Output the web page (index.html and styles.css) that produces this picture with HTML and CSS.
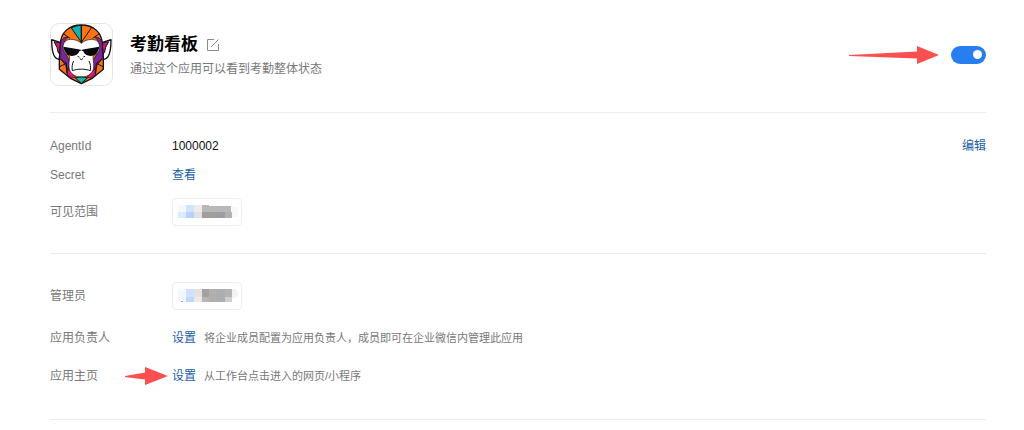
FILE: index.html
```html
<!DOCTYPE html>
<html lang="zh-CN">
<head>
<meta charset="utf-8">
<meta name="viewport" content="width=device-width, initial-scale=1">
<title>考勤看板</title>
<link rel="stylesheet" href="styles.css">
</head>
<body>
<main class="page">
  <header class="app-header">
    <div class="app-logo">
      <svg viewBox="153 72 183 183" aria-hidden="true">
        <g stroke="#141116" stroke-width="4" stroke-linejoin="round">
          <path d="M183 128L155 119c0 20 1 39 9 51 3 5 8 8 14 9zM305 128l28-9c0 20-1 39-9 51-3 5-8 8-14 9z" fill="#fff"/>
          <path d="M182 129l-20-4 9 17 3 14 6 8zM306 129l20-4-9 17-3 14-6 8z" fill="#d4146f" stroke-width="3"/>
          <path d="M244 75c-36 0-62 22-63 57l-3 45v31l35 28 31 15 31-15 35-28v-31l-3-45c-1-35-27-57-63-57z" fill="#ff7410"/>
          <path d="M244 76c-11 0-21 3-30 8l30 43z" fill="#10b3ae" stroke-width="3"/>
          <path d="M182 126c4-11 13-16 22-15l-9 10-5 20 7 20 12 22-6 42-6-28-17-24zM306 126c-4-11-13-16-22-15l9 10 5 20-7 20-12 22 6 42 6-28 17-24z" fill="#7a2599" stroke-width="2"/>
          <path d="M202 205l10 10 15 17-12 2-13-10zM286 205l-10 10-15 17 12 2 13-10z" fill="#e3177c" stroke-width="2"/>
          <path d="M180 177l19 13-20 10M308 177l-19 13 20 10M199 190l2 30M289 190l-2 30M244 76v52M190 101l20 14M298 101l-20 14M274 84l-30 43" fill="none" stroke-width="3"/>
          <path d="M189 142c0-15 9-23 23-24 13 0 25 5 32 12 7-7 19-12 32-12 14 1 23 9 23 24-1 13-7 19-18 24-3 3-2 9-1 15 2 12 2 23-2 32-5 10-17 18-34 18s-29-8-34-18c-4-9-4-20-2-32 1-6 2-12-1-15-11-5-17-11-18-24z" fill="#fff" stroke-width="2"/>
          <path d="M226 234c12-4 24-4 36 0l-18 16z" fill="#13b8af" stroke-width="3"/>
        </g>
        <path d="M190 140l45 8 9 2 9-2 45-8c-3 16-12 27-26 28-11 0-19-5-22-14l-6-3-6 3c-3 9-11 14-22 14-14-1-23-12-26-28z" fill="#08080a"/>
        <path d="M233 169l5 2M255 169l-5 2M239 176l5 3 5-3M217 212c15-6 39-6 54 0M221 183c-4 8-6 17-4 29M267 183c4 8 6 17 4 29" fill="none" stroke="#141116" stroke-width="3"/>
      </svg>
    </div>
    <div class="app-info">
      <div class="title-row">
        <h1 class="app-title">考勤看板</h1>
        <button class="edit-button" type="button" aria-label="编辑名称">
          <svg viewBox="0 0 12 12" aria-hidden="true"><path d="M7 .5H.5v11h11V5M4 8l7.500-7.500" /></svg>
        </button>
      </div>
      <p class="app-desc">通过这个应用可以看到考勤整体状态</p>
    </div>
    <svg class="arrow arrow-long" viewBox="0 0 90 18" aria-hidden="true"><path d="M0 9l68-3.500V0l22 9-22 9v-5.500L0 10z"/></svg>
    <input class="switch" type="checkbox" role="switch" aria-label="启用应用" checked>
  </header>

  <section class="section">
    <div class="row">
      <div class="label">AgentId</div>
      <div class="value">1000002</div>
      <a class="link" href="#edit">编辑</a>
    </div>
    <div class="row row-secret">
      <div class="label">Secret</div>
      <a class="link" href="#secret">查看</a>
    </div>
    <div class="row row-scope">
      <div class="label">可见范围</div>
      <div class="member">
        <svg viewBox="0 0 60 16" aria-hidden="true">
          <path fill="#f5f9ff" d="M0 1h8v7H0z"/><path fill="#deeaff" d="M0 8h8v6H0z"/>
          <path fill="#d0e3ff" d="M8 1h8v7H8z"/><path fill="#b4d2fc" d="M8 8h8v6H8z"/>
          <path fill="#efebea" d="M16 1h8v7h-8z"/><path fill="#e4dfe0" d="M16 8h8v6h-8z"/>
          <path fill="#b8b8b8" d="M24 1h7v1h22v6H24z"/><path fill="#a19f9e" d="M24 8h15v6H24z"/>
          <path fill="#9b9da3" d="M39 8h8v6h-8z"/><path fill="#b3b2b3" d="M47 8h7v6h-7z"/>
          <path fill="#f5f9fe" d="M54 3h6v10h-6z"/>
        </svg>
      </div>
    </div>
  </section>

  <section class="section section-manage">
    <div class="row">
      <div class="label">管理员</div>
      <div class="member">
        <svg viewBox="0 0 60 16" aria-hidden="true">
          <path fill="#f1f6ff" d="M0 1h8v13H3L0 9z"/><path fill="#76aef2" d="M3 13h2v1H3z"/>
          <path fill="#cfe2fd" d="M8 1h8v8H8z"/><path fill="#bed8fb" d="M8 9h8v5H8z"/>
          <path fill="#e4e1df" d="M16 1h8v8h-8z"/><path fill="#eeeae9" d="M16 9h8v5h-8z"/>
          <path fill="#a2a2a2" d="M24 1h7v8h-7z"/><path fill="#b2b0af" d="M31 1h8v13h-8z"/>
          <path fill="#b8b6b4" d="M24 9h7v5h-7z"/><path fill="#acaeb2" d="M39 1h8v13h-8z"/>
          <path fill="#b5b2b2" d="M47 1h7v8h-7z"/><path fill="#d2d0cf" d="M47 9h7v5h-7z"/>
          <path fill="#f1f3fb" d="M54 1h4l2 3v4l-3 2h-3z"/>
        </svg>
      </div>
    </div>
    <div class="row row-setting">
      <div class="label">应用负责人</div>
      <a class="link" href="#owner">设置</a>
      <span class="hint">将企业成员配置为应用负责人，成员即可在企业微信内管理此应用</span>
    </div>
    <div class="row row-setting">
      <div class="label">应用主页
        <svg class="arrow arrow-short" viewBox="0 0 43 18" aria-hidden="true"><path d="M0 9l20-3.500V0l23 9-23 9v-5.500L0 10z"/></svg>
      </div>
      <a class="link" href="#home">设置</a>
      <span class="hint">从工作台点击进入的网页/小程序</span>
    </div>
  </section>
</main>
</body>
</html>
```
FILE: styles.css
```css
* {
  box-sizing: border-box;
}

body {
  margin: 0;
  background: #fff;
  color: #111;
  font: 12px/20px "Liberation Sans", "Noto Sans CJK SC", sans-serif;
}

.page {
  padding: 0 38px 0 50px;
}

.app-header {
  display: flex;
  align-items: center;
  padding: 23px 0 26px;
  border-bottom: 1px solid #ececec;
}

.app-logo {
  width: 63px;
  height: 63px;
  border: 1px solid #e6e6e6;
  border-radius: 9px;
  overflow: hidden;
}

.app-logo svg {
  display: block;
  width: 100%;
  height: 100%;
}

.app-info {
  flex: 1;
  margin-left: 17px;
  padding-top: 3px;
}

.title-row {
  display: flex;
  align-items: center;
  gap: 9px;
}

.app-title {
  margin: 0;
  color: #000;
  font-size: 17px;
  line-height: 24px;
}

.edit-button {
  width: 12px;
  height: 12px;
  padding: 0;
  border: 0;
  background: none;
}

.edit-button svg {
  display: block;
  fill: none;
  stroke: #8b8b8b;
}

.app-desc {
  margin: 2px 0 0;
  color: #787878;
}

.arrow {
  flex: none;
  fill: #fb4f50;
}

.arrow-long {
  width: 90px;
  height: 18px;
  margin-right: 12px;
}

.arrow-short {
  width: 43px;
  height: 18px;
}

.switch {
  display: flex;
  align-items: center;
  justify-content: flex-end;
  width: 35px;
  height: 18px;
  margin: 0;
  padding: 0 4px;
  border-radius: 9px;
  background: #267ef0;
  appearance: none;
}

.switch::before {
  content: "";
  width: 9px;
  height: 9px;
  border-radius: 50%;
  background: #fff;
}

.switch:not(:checked) {
  justify-content: flex-start;
  background: #bbb;
}

.section {
  padding: 23px 0 27px;
  border-bottom: 1px solid #ececec;
}

.section-manage {
  padding: 28px 0 33px;
}

.row {
  display: flex;
  align-items: center;
}

.row-secret {
  margin-top: 9px;
}

.row-scope {
  margin-top: 13px;
}

.row-setting {
  margin-top: 18px;
}

.label {
  display: flex;
  align-items: center;
  justify-content: space-between;
  width: 122px;
  padding-right: 4px;
  color: #787878;
}

.value {
  flex: 1;
}

.link {
  color: #215fa8;
  text-decoration: none;
}

.member {
  width: 70px;
  height: 28px;
  padding: 5px 4px 5px 5px;
  border: 1px solid #ededed;
  border-radius: 4px;
}

.member svg {
  display: block;
  width: 60px;
  height: 16px;
}

.hint {
  margin-left: 8px;
  color: #787878;
  font-size: 11px;
}
```
